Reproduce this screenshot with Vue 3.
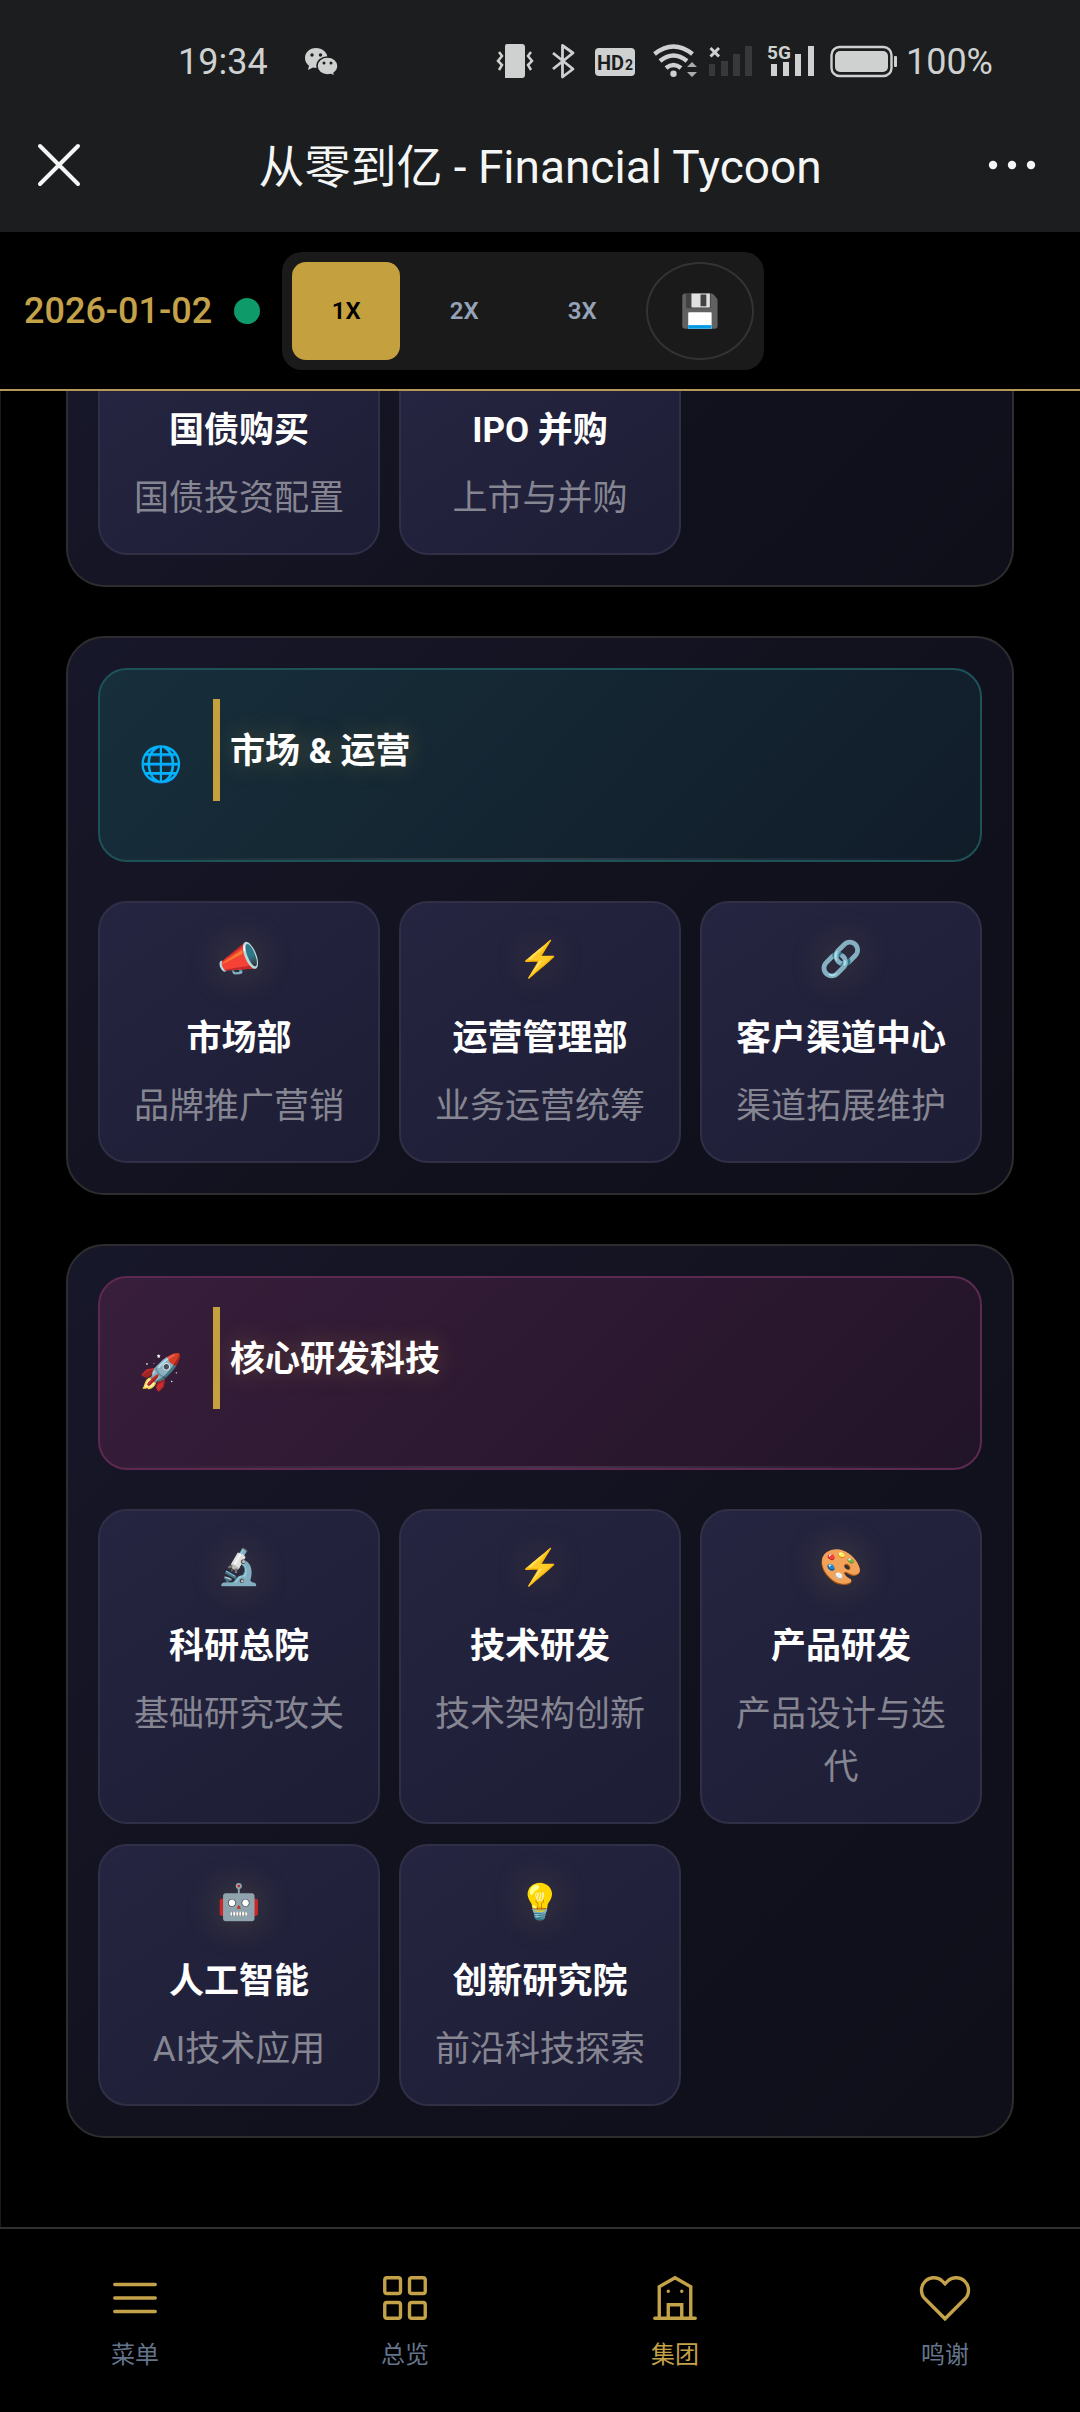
<script setup>
import { ref } from 'vue';

const speeds = ['1X', '2X', '3X'];
const speed = ref('1X');
const tab = ref('集团');

const tail = [
  { name: '国债购买', desc: '国债投资配置' },
  { name: 'IPO 并购', desc: '上市与并购' },
];

const groups = [
  {
    title: '市场 & 运营',
    icon: '🌐',
    theme: 'teal',
    cards: [
      { icon: '📣', name: '市场部', desc: '品牌推广营销' },
      { icon: '⚡', name: '运营管理部', desc: '业务运营统筹' },
      { icon: '🔗', name: '客户渠道中心', desc: '渠道拓展维护' },
    ],
  },
  {
    title: '核心研发科技',
    icon: '🚀',
    theme: 'pink',
    cards: [
      { icon: '🔬', name: '科研总院', desc: '基础研究攻关' },
      { icon: '⚡', name: '技术研发', desc: '技术架构创新' },
      { icon: '🎨', name: '产品研发', desc: '产品设计与迭代' },
      { icon: '🤖', name: '人工智能', desc: 'AI技术应用' },
      { icon: '💡', name: '创新研究院', desc: '前沿科技探索' },
    ],
  },
];

const tabs = [
  { name: '菜单', path: 'M3 6h18M3 12h18M3 18h18' },
  { name: '总览', path: 'M4 3h5a1 1 0 0 1 1 1v5a1 1 0 0 1-1 1H4a1 1 0 0 1-1-1V4a1 1 0 0 1 1-1zM15 3h5a1 1 0 0 1 1 1v5a1 1 0 0 1-1 1h-5a1 1 0 0 1-1-1V4a1 1 0 0 1 1-1zM4 14h5a1 1 0 0 1 1 1v5a1 1 0 0 1-1 1H4a1 1 0 0 1-1-1v-5a1 1 0 0 1 1-1zM15 14h5a1 1 0 0 1 1 1v5a1 1 0 0 1-1 1h-5a1 1 0 0 1-1-1v-5a1 1 0 0 1 1-1z' },
  { name: '集团', path: 'M3 21h18M5 21V7l7-4 7 4v14M9 21v-6h6v6M9 9h.01M15 9h.01' },
  { name: '鸣谢', path: 'M20.84 4.61a5.5 5.5 0 0 0-7.78 0L12 5.67l-1.06-1.06a5.5 5.5 0 0 0-7.78 7.78l1.06 1.06L12 21.23l7.78-7.78 1.06-1.06a5.5 5.5 0 0 0 0-7.78z' },
];
</script>

<template>
  <div class="page">
    <header class="top">
      <div class="status">
        <div class="status__left">
          <span>19:34</span>
          <svg width="34" height="30" viewBox="0 0 34 30">
            <path d="M12 1C5.500 1 1 5.500 1 11c0 3.500 1.700 6 4 7.800L4 23l5-2.400c1 .3 2 .4 3 .4 6.500 0 11.500-4.500 11.500-10S18.500 1 12 1z" fill="#cfd1d1" />
            <path d="M23.500 10c-6 0-10.500 4-10.500 9s4.500 9 10.500 9c1.300 0 2.500-.2 3.500-.5l4 2-1-3.500c2.500-1.700 4-4 4-7 0-5-4.500-9-10.500-9z" fill="#cfd1d1" stroke="#1b1d1e" stroke-width="1.500" />
            <g fill="#1b1d1e">
              <circle cx="8" cy="8" r="1.700" />
              <circle cx="16.500" cy="8" r="1.700" />
              <circle cx="20" cy="16" r="1.500" />
              <circle cx="27" cy="16" r="1.500" />
            </g>
          </svg>
        </div>
        <div class="status__right">
          <svg width="44" height="40" viewBox="0 0 44 40">
            <path d="M13 2h15q3 0 3 3v28q0 3-3 3H11V4q0-2 2-2z" fill="#cfd1d1" />
            <path d="M5 10l3 4-4 5 4 4-3 5M37 10l-3 4 4 5-4 4 3 5" fill="none" stroke="#cfd1d1" stroke-width="2.500" />
          </svg>
          <svg width="36" height="40" viewBox="0 0 36 40">
            <path d="M7 11l20 16-10.500 8V3.500L27 11 7 27" fill="none" stroke="#cfd1d1" stroke-width="2.800" stroke-linejoin="round" />
          </svg>
          <svg width="48" height="40" viewBox="0 0 48 40">
            <rect x="5" y="6" width="40" height="28" rx="4" fill="#cfd1d1" />
            <text x="7" y="28" class="hd">HD</text>
            <text x="35" y="28" class="hd hd--sub">2</text>
          </svg>
          <svg width="54" height="40" viewBox="0 0 54 40">
            <path d="M8.500 12q19-15 38 0M14 19q13.500-11 27 0M20 26q7.500-6 15 0" fill="none" stroke="#cfd1d1" stroke-width="4.500" />
            <circle cx="27.500" cy="31.700" r="3.200" fill="#cfd1d1" />
            <path d="M41 25l5-5 5 5zM41 30l5 5 5-5z" fill="#a9abac" />
          </svg>
          <svg width="46" height="40" viewBox="0 0 46 40">
            <path d="M2.500 6l8.500 8.500M11 6l-8.500 8.500" stroke="#cfd1d1" stroke-width="3" />
            <path d="M1 22h6v12H1zM13 19h7v15h-7zM25 12h7v22h-7zM37 4h7v30h-7z" fill="#37393a" />
          </svg>
          <svg width="56" height="40" viewBox="0 0 56 40">
            <text x="5" y="17" class="net">5G</text>
            <path d="M9 22h6v12H9zM21 20h6v14h-6zM33 12h6v22h-6zM46 4h6v30h-6z" fill="#cfd1d1" />
          </svg>
          <svg width="72" height="40" viewBox="0 0 72 40">
            <rect x="5.500" y="5" width="60" height="29" rx="8" fill="none" stroke="#cfd1d1" stroke-width="2.400" />
            <rect x="9" y="9" width="53" height="21" rx="5" fill="#cfd1d1" />
            <rect x="68" y="14" width="3" height="11" rx="1" fill="#cfd1d1" />
          </svg>
          <span>100%</span>
        </div>
      </div>
      <div class="titlebar">
        <button class="close" aria-label="关闭">
          <svg width="44" height="44" viewBox="0 0 44 44">
            <path d="M3 3l38 38M41 3L3 41" stroke="#f4f5f5" stroke-width="4" stroke-linecap="round" />
          </svg>
        </button>
        <h1 class="titlebar__text">从零到亿 - Financial Tycoon</h1>
        <button class="more" aria-label="更多">
          <svg width="48" height="44" viewBox="0 0 48 44" fill="#f4f5f5">
            <circle cx="5" cy="22" r="4.200" />
            <circle cx="24" cy="22" r="4.200" />
            <circle cx="43" cy="22" r="4.200" />
          </svg>
        </button>
      </div>
    </header>

    <div class="toolbar">
      <time class="toolbar__date">2026-01-02</time>
      <span class="toolbar__dot"></span>
      <div class="speeds">
        <button
          v-for="s in speeds"
          :key="s"
          class="speed"
          :class="speed === s ? 'speed--active' : ''"
          @click="speed = s"
        >
          {{ s }}
        </button>
        <button class="speed speed--save" aria-label="保存">💾</button>
      </div>
    </div>

    <main class="content">
      <section class="panel panel--cut">
        <div class="grid">
          <article v-for="c in tail" :key="c.name" class="card card--cut">
            <h3 class="card__name">{{ c.name }}</h3>
            <p class="card__desc">{{ c.desc }}</p>
          </article>
        </div>
      </section>

      <section v-for="g in groups" :key="g.title" class="panel">
        <header class="head" :class="'head--' + g.theme">
          <span class="head__icon">{{ g.icon }}</span>
          <h2 class="head__title">{{ g.title }}</h2>
        </header>
        <div class="grid">
          <article v-for="c in g.cards" :key="c.name" class="card">
            <span class="card__icon">{{ c.icon }}</span>
            <h3 class="card__name">{{ c.name }}</h3>
            <p class="card__desc">{{ c.desc }}</p>
          </article>
        </div>
      </section>
    </main>

    <nav class="tabs">
      <button
        v-for="t in tabs"
        :key="t.name"
        class="tab"
        :class="tab === t.name ? 'tab--active' : ''"
        @click="tab = t.name"
      >
        <svg
          width="54"
          height="54"
          viewBox="0 0 24 24"
          fill="none"
          stroke="#c4a24a"
          stroke-width="1.500"
          stroke-linecap="round"
        >
          <path :d="t.path" />
        </svg>
        <span>{{ t.name }}</span>
      </button>
    </nav>
  </div>
</template>

<style>
body {
  background: #000000;
}
</style>

<style scoped>
.page {
  display: flex;
  flex-direction: column;
  min-height: 100vh;
  background: #000000;
  font-family: Roboto, 'Noto Sans CJK SC', 'Noto Color Emoji', sans-serif;
}

h1,
h2,
h3,
p {
  margin: 0;
}

button {
  margin: 0;
  padding: 0;
  border: none;
  background: none;
  font-family: inherit;
  cursor: pointer;
}

svg {
  display: block;
}

.top {
  background: #1b1d1e;
}

.status {
  display: flex;
  justify-content: space-between;
  align-items: center;
  height: 72px;
  padding: 26px 87px 0 178px;
  color: #cfd1d1;
  font-size: 36px;
}

.status__left {
  display: flex;
  align-items: center;
  gap: 36px;
}

.status__right {
  display: flex;
  align-items: center;
  gap: 8px;
}

.hd {
  font-size: 20px;
  font-weight: 700;
  fill: #1b1d1e;
}

.hd--sub {
  font-size: 14px;
}

.net {
  font-size: 19px;
  font-weight: 700;
  fill: #cfd1d1;
}

.titlebar {
  display: grid;
  grid-template-columns: 1fr auto 1fr;
  align-items: center;
  height: 134px;
}

.titlebar__text {
  padding-bottom: 4px;
  color: #f4f5f5;
  font-size: 46px;
  font-weight: 400;
}

.close {
  justify-self: start;
  padding-left: 37px;
}

.more {
  justify-self: end;
  padding-right: 44px;
}

.toolbar {
  display: flex;
  align-items: center;
  gap: 22px;
  padding: 20px 24px 19px;
  border-bottom: 2px solid #b3985a;
}

.toolbar__date {
  color: #c4a24a;
  font-size: 36px;
  font-weight: 500;
}

.toolbar__dot {
  width: 26px;
  height: 26px;
  border-radius: 50%;
  background: #0f9a6a;
}

.speeds {
  display: flex;
  gap: 10px;
  padding: 10px;
  border-radius: 20px;
  background: #1a1a1a;
}

.speed {
  width: 108px;
  height: 98px;
  border-radius: 14px;
  color: #94a3b8;
  font-size: 24px;
  font-weight: 600;
}

.speed--active {
  background: #c4a03f;
  color: #000000;
}

.speed--save {
  border: 2px solid #333333;
  border-radius: 50%;
  font-size: 32px;
}

.content {
  flex-grow: 1;
  display: flex;
  flex-direction: column;
  gap: 49px;
  padding: 0 66px 88px 65px;
  border-left: 1px solid #1c1a14;
}

.panel {
  padding: 30px;
  border: 2px solid #2d2d2f;
  border-radius: 38px;
  background: linear-gradient(135deg, #17172a 0%, #12121f 50%, #0f0f1a 100%);
}

.panel--cut {
  padding-top: 0;
  border-top: none;
  border-top-left-radius: 0;
  border-top-right-radius: 0;
}

.head {
  position: relative;
  display: flex;
  align-items: center;
  gap: 30px;
  margin-bottom: 39px;
  padding: 29px 39px;
  border: 2px solid;
  border-radius: 29px;
  overflow: hidden;
}

.head::after {
  content: '';
  position: absolute;
  right: 0;
  bottom: 0;
  left: 0;
  height: 2px;
  background: linear-gradient(90deg, transparent, rgba(255, 255, 255, 0.12), transparent);
}

.head--teal {
  border-color: #1d5256;
  background: linear-gradient(135deg, #172f3b, #111c29);
}

.head--pink {
  border-color: #5c2a50;
  background: linear-gradient(135deg, #381e3b, #221428);
}

.head__icon {
  width: 44px;
  font-size: 35px;
  line-height: 44px;
  text-align: center;
}

.head__title {
  margin-bottom: 30px;
  padding: 4px 0 0 10px;
  border-left: 7px solid #c4a03f;
  color: #ffffff;
  font-size: 35px;
  font-weight: 700;
  line-height: 98px;
  text-shadow: 0 0 24px rgba(196, 160, 63, 0.3);
}

.grid {
  display: grid;
  grid-template-columns: repeat(3, 1fr);
  gap: 20px 19px;
}

.card {
  display: flex;
  flex-direction: column;
  align-items: center;
  padding: 32px 30px 28px;
  border: 2px solid #2f2f46;
  border-radius: 29px;
  background: linear-gradient(145deg, #252541, #1d1d35);
  text-align: center;
}

.card--cut {
  padding-top: 13px;
  border-top: none;
  border-top-left-radius: 0;
  border-top-right-radius: 0;
}

.card__icon {
  margin-bottom: 27px;
  font-size: 35px;
  line-height: 50px;
  text-shadow: 0 0 36px rgba(196, 160, 63, 0.3);
}

.card__name {
  margin-bottom: 15px;
  color: #ffffff;
  font-size: 35px;
  font-weight: 700;
  line-height: 53px;
  white-space: nowrap;
}

.card__desc {
  color: #868692;
  font-size: 35px;
  line-height: 53px;
}

.tabs {
  display: flex;
  padding: 42px 0;
  border-top: 2px solid #303030;
}

.tab {
  flex: 1;
  display: flex;
  flex-direction: column;
  align-items: center;
  gap: 15px;
  color: #64748b;
  font-size: 24px;
  line-height: 30px;
}

.tab--active {
  color: #c4a24a;
}
</style>
